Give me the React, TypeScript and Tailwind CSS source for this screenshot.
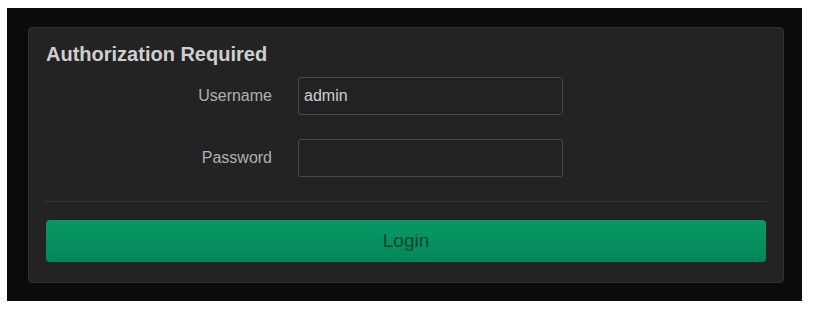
export default function App() {
  return (
    <div className="w-[818px] h-[311px] bg-white overflow-hidden font-['Liberation_Sans',Arial,sans-serif]">
      <div className="ml-[7px] mt-[8px] w-[795px] h-[293px] bg-[#0b0b0b] pt-[19px] pl-[21px]">
        <div className="w-[756px] h-[256px] rounded-[4px] border border-[#313131] bg-[#232323] px-[17px] pt-[13px]">
          <h2 className="text-[20px] leading-[26px] font-bold text-[#cfcfcf]">Authorization Required</h2>

          <div className="mt-[10px] flex flex-col gap-[24px]">
            <div className="flex items-center">
              <label className="w-[226px] text-right text-[16px] text-[#b0b0b0]">Username</label>
              <input
                defaultValue="admin"
                className="ml-[26px] w-[265px] h-[38px] rounded-[3px] border border-[#4a4a4a] bg-[#222] px-[5px] text-[16px] text-[#d0d0d0] outline-none"
              />
            </div>
            <div className="flex items-center">
              <label className="w-[226px] text-right text-[16px] text-[#b0b0b0]">Password</label>
              <input
                type="password"
                className="ml-[26px] w-[265px] h-[38px] rounded-[3px] border border-[#4a4a4a] bg-[#222] px-[5px] text-[16px] text-[#d0d0d0] outline-none"
              />
            </div>
          </div>

          <div className="mt-[24px] h-px bg-[#333] -mx-px" />

          <button className="mt-[18px] w-full h-[42px] rounded-[4px] bg-gradient-to-b from-[#079a64] to-[#058659] text-[19px] text-[#0a4530]">
            Login
          </button>
        </div>
      </div>
    </div>
  );
}
